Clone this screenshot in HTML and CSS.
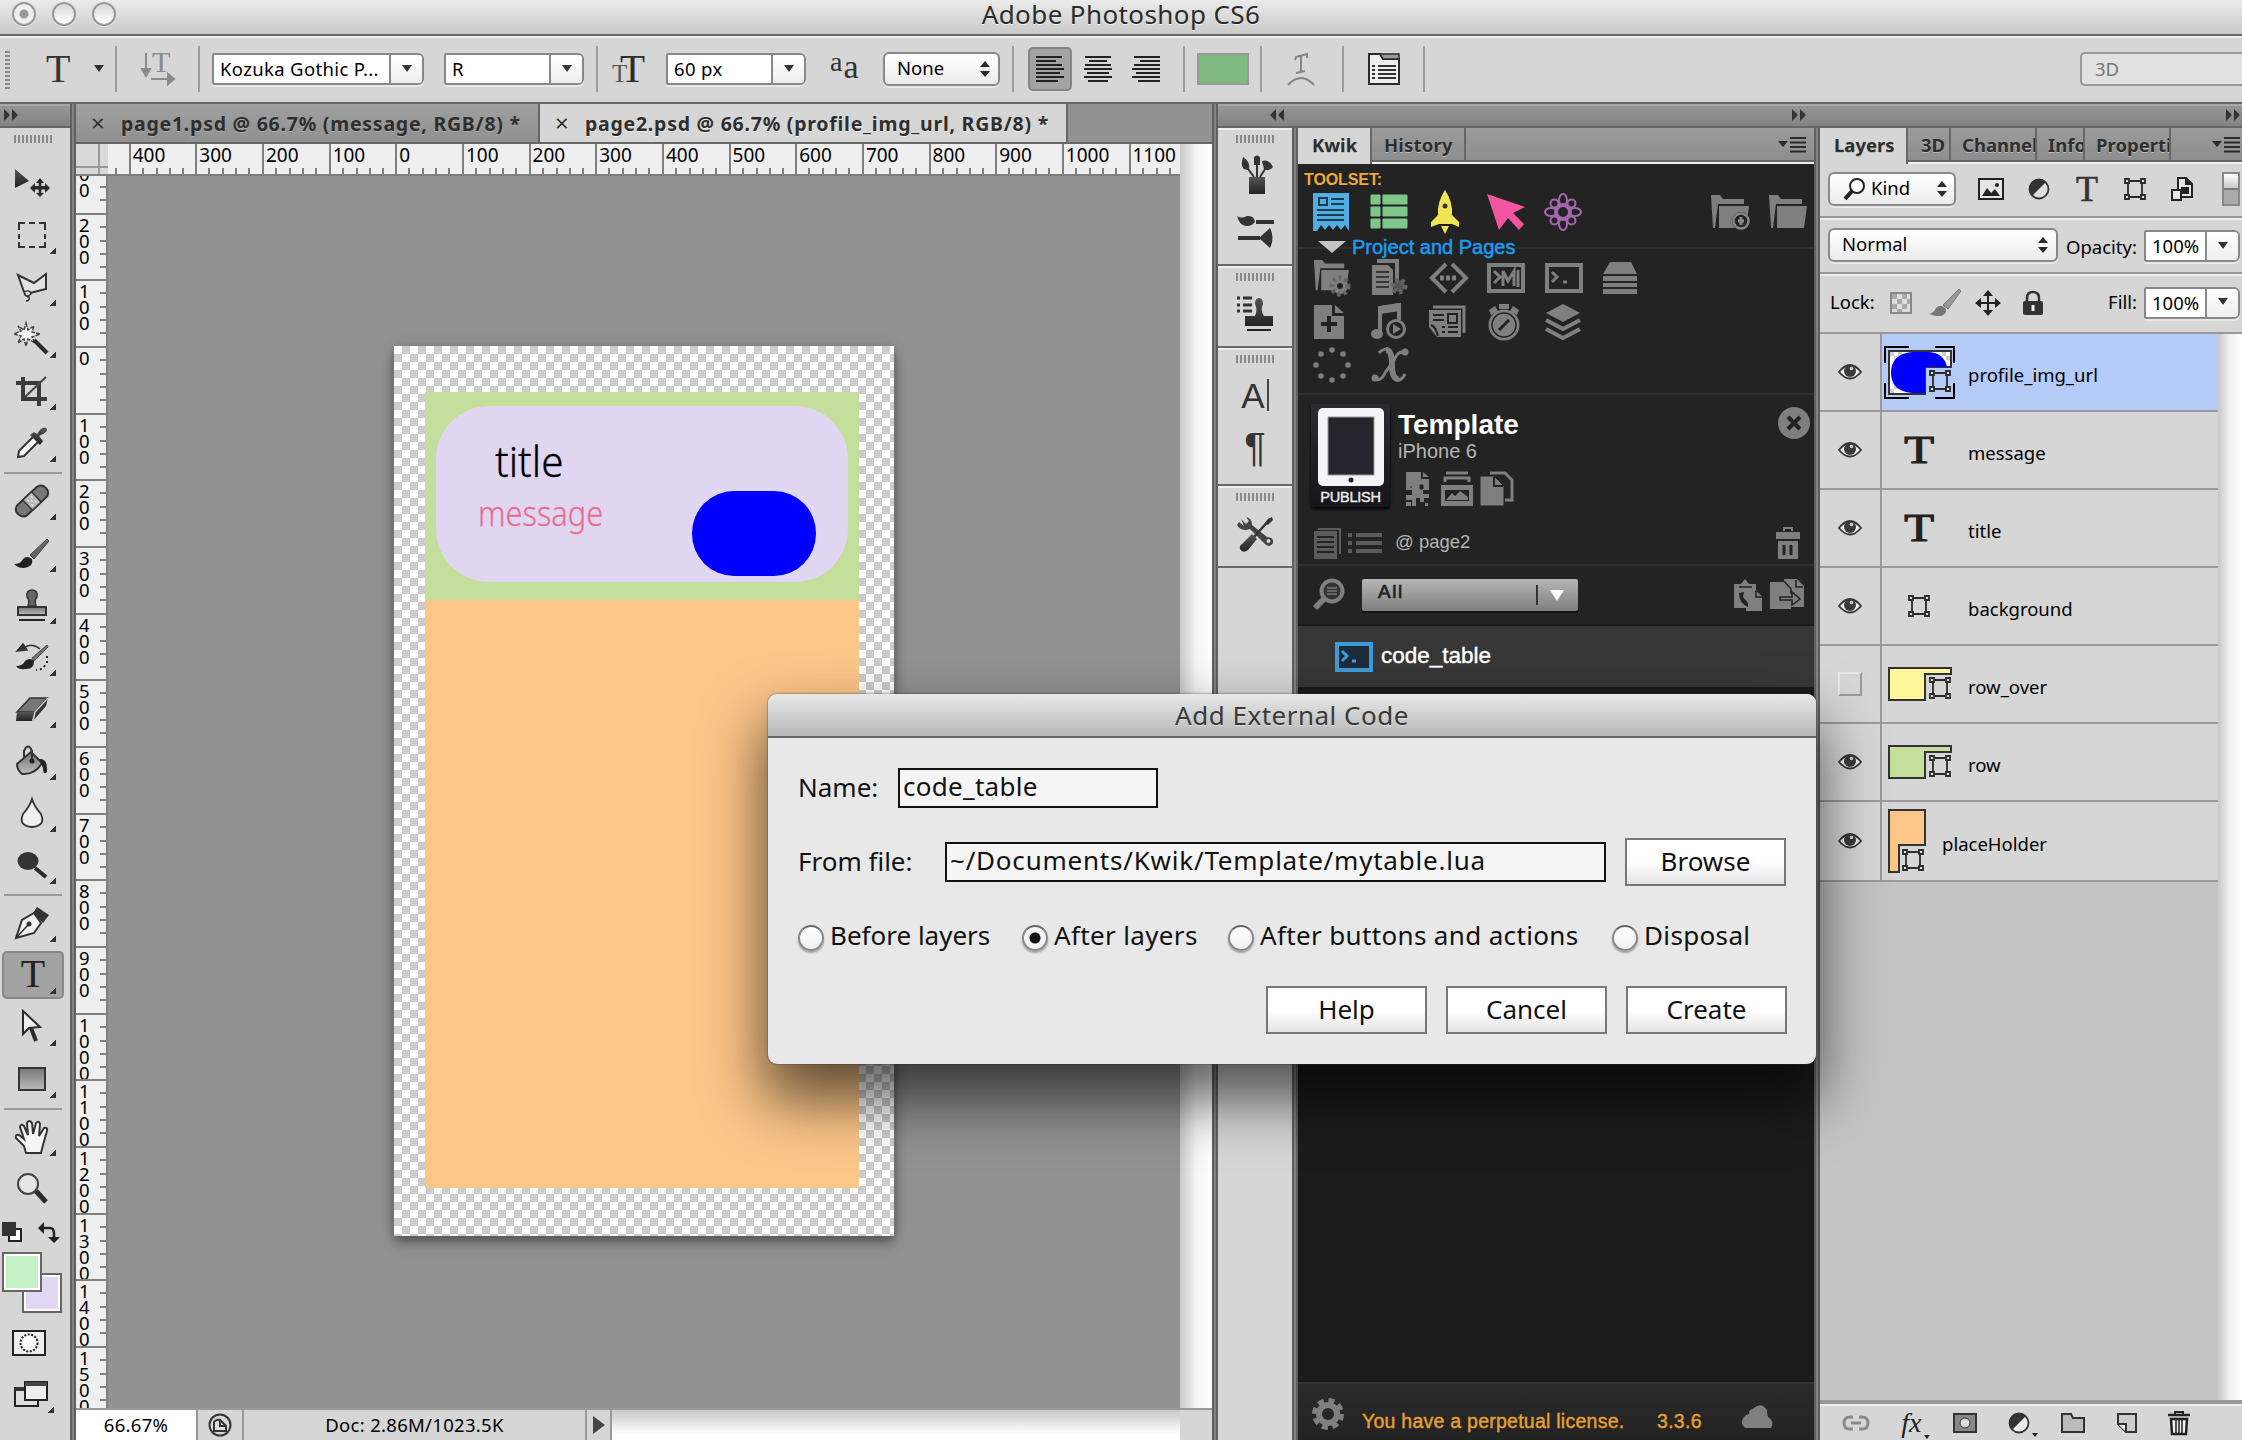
FILE: index.html
```html
<!DOCTYPE html>
<html lang="en">
<head>
<meta charset="utf-8">
<title>Adobe Photoshop CS6</title>
<link rel="stylesheet" href="styles.css">
</head>
<body>
<svg class="defs" width="0" height="0">
  <defs>
    <linearGradient id="gd" x1="0" y1="0" x2="0" y2="1"><stop offset="0" stop-color="#555"/><stop offset="1" stop-color="#222"/></linearGradient>
    <linearGradient id="gm" x1="0" y1="0" x2="0" y2="1"><stop offset="0" stop-color="#777"/><stop offset="1" stop-color="#bbb"/></linearGradient>
    <symbol id="eye" viewBox="0 0 24 18"><path d="M1 9Q12-5 23 9Q12 22 1 9Z" fill="#eee" stroke="#333" stroke-width="1.8"/><circle cx="12" cy="8" r="6" fill="#3a3a3a"/><circle cx="13.5" cy="5.5" r="1.8" fill="#ccc"/></symbol>
    <symbol id="frame" viewBox="0 0 22 22"><path d="M4 3H18V19H4Z" fill="none" stroke="#2b2b2b" stroke-width="1.8"/><g fill="#e4e4e4" stroke="#2b2b2b" stroke-width="1.8"><path d="M1 1H5V5H1ZM17 1H21V5H17ZM1 17H5V21H1ZM17 17H21V21H17Z"/></g></symbol>
    <symbol id="menu" viewBox="0 0 28 16"><path d="M0 4H10L5 10Z" fill="#2b2b2b"/><path d="M12 1H28M12 5.5H28M12 10H28M12 14.500H28" stroke="#2b2b2b" stroke-width="2"/></symbol>
    <symbol id="fwd" viewBox="0 0 14 12"><path d="M0 0L6 6L0 12ZM8 0L14 6L8 12Z" fill="#333"/></symbol>
    <symbol id="updown" viewBox="0 0 10 16"><path d="M0 6L5 0L10 6ZM0 10L5 16L10 10Z" fill="#2b2b2b"/></symbol>
    <symbol id="folder" viewBox="0 0 40 36"><path d="M1 1H10L13 5H34V10H8L5 34H3Z" fill="#7f7f7f"/><path d="M9 12H39L36 34H9Z" fill="#7f7f7f"/></symbol>
  </defs>
</svg>

<header class="titlebar">
  <div class="lights"><i class="light dot"></i><i class="light"></i><i class="light"></i></div>
  <span class="app-title">Adobe Photoshop CS6</span>
</header>

<section class="options">
  <i class="vgrip"></i>
  <span class="tool-t">T</span><i class="tri"></i><i class="sep s1"></i>
  <svg class="orient" width="34" height="34" viewBox="0 0 34 34"><path d="M5 1V22M1 17L5 24L9 17ZM10 27H30M27 22L33 27L27 32Z" stroke="#8a8a8a" stroke-width="2" fill="#8a8a8a"/><text x="11" y="20" class="svg-serif" font-size="30" fill="#8a8a8a">T</text></svg>
  <i class="sep s2"></i>
  <div class="combo c1"><span>Kozuka Gothic P...</span><b><i class="tri"></i></b></div>
  <div class="combo c2"><span>R</span><b><i class="tri"></i></b></div>
  <i class="sep s3"></i>
  <svg class="sizeic" width="34" height="30" viewBox="0 0 34 30"><text x="0" y="28" class="svg-serif" font-size="25" fill="#555">T</text><text x="8" y="28" class="svg-serif" font-size="41" fill="#2b2b2b">T</text></svg>
  <div class="combo c3"><span>60 px</span><b><i class="tri"></i></b></div>
  <svg class="aaic" width="30" height="30" viewBox="0 0 30 30"><text x="0" y="17" font-size="28" class="svg-serif" fill="#333">a</text><text x="13.500" y="24" font-size="34" class="svg-serif" fill="#333">a</text></svg>
  <div class="select none"><span>None</span><svg width="10" height="16"><use href="#updown"/></svg></div>
  <i class="sep s4"></i>
  <div class="align on"><svg width="28" height="28" viewBox="0 0 28 28"><path d="M0 2H26M0 6H20M0 10H26M0 14H28M0 18H24M0 22H28M0 26H22" stroke="#222" stroke-width="2"/></svg></div>
  <div class="align"><svg width="28" height="28" viewBox="0 0 28 28"><path d="M1 2H27M5 6H23M1 10H27M0 14H28M3 18H25M0 22H28M4 26H24" stroke="#222" stroke-width="2"/></svg></div>
  <div class="align"><svg width="28" height="28" viewBox="0 0 28 28"><path d="M2 2H28M8 6H28M2 10H28M0 14H28M4 18H28M0 22H28M6 26H28" stroke="#222" stroke-width="2"/></svg></div>
  <i class="sep s5"></i><i class="color"></i><i class="sep s6"></i>
  <svg class="warp" width="28" height="34" viewBox="0 0 28 34"><g fill="none" stroke="#858585" stroke-width="2"><path d="M8 8L9 5L20 2V6M14 4V19M9 21L18 19M1 33Q14 19 27 33"/></g></svg>
  <i class="sep s6"></i>
  <svg class="panelic" width="32" height="32" viewBox="0 0 32 32"><path d="M1 1H12L15 6H31V31H1Z" fill="#eee" stroke="#2b2b2b" stroke-width="2"/><path d="M12 1H31V6H15Z" fill="#999" stroke="#2b2b2b" stroke-width="1.500"/><path d="M4 13H7M10 13H28M4 17H7M10 17H28M4 21H7M10 21H28M4 25H7M10 25H28" stroke="#333" stroke-width="2"/></svg>
  <i class="sep s7"></i>
  <div class="workspace">3D</div>
</section>

<main class="work">
  <aside class="tools">
    <div class="dock-head"><svg width="14" height="12"><use href="#fwd"/></svg></div>
    <i class="hgrip"></i>
    <div class="tool bare"><svg width="36" height="28" viewBox="0 0 36 28"><path d="M1 0V19L15 12Z" fill="url(#gd)"/><path d="M26 9L30 14H27.300V17H31V14L36 19L31 24V20.500H27.300V24H30L26 28L22 24H24.700V20.500H21V24L16 19L21 14V17H24.700V14H22Z" fill="#2b2b2b"/></svg></div>
    <div class="tool"><svg width="28" height="26" viewBox="0 0 28 26"><path d="M1 8V1H7M11 1H17M21 1H27V8M27 12V17M27 20V25H21M17 25H11M7 25H1V20M1 17V12" fill="none" stroke="#333" stroke-width="2"/></svg></div>
    <div class="tool"><svg width="32" height="30" viewBox="0 0 32 30"><path d="M8 20L2 3L18 11L30 2V17L14 21" fill="#e2e2e2" stroke="#333" stroke-width="2"/><path d="M8 20Q14 17 15 22Q9 27 8 20Q10 25 13 25Q14 29 10 29" fill="none" stroke="#333" stroke-width="1.500"/></svg></div>
    <div class="tool"><svg width="36" height="34" viewBox="0 0 36 34"><path d="M12 1L14 8L20 4L18 10L26 12L18 15L21 21L14 17L12 24L10 17L4 21L7 14L0 12L7 9L4 4L10 8Z" fill="#f2f2f2" stroke="#444" stroke-width="1.500" stroke-dasharray="4 1"/><path d="M20 18L33 31" stroke="#2b2b2b" stroke-width="4"/></svg></div>
    <div class="tool"><svg width="32" height="30" viewBox="0 0 32 30"><path d="M0 7H23V30M7 1V23H31" fill="none" stroke="#3a3a3a" stroke-width="4"/><path d="M9 21L30 1" stroke="#444" stroke-width="2"/></svg></div>
    <div class="tool"><svg width="32" height="32" viewBox="0 0 32 32"><path d="M17 10L3 24L2 30L8 29L22 15" fill="#f5f5f5" stroke="#333" stroke-width="2"/><path d="M14 8L24 18L27 14L23 9Q34 4 30 1Q26-1 21 7L18 5Z" fill="url(#gd)"/></svg></div>
    <i class="tsep"></i>
    <div class="tool"><svg width="34" height="34" viewBox="0 0 34 34"><g transform="rotate(-43 17 17)"><rect x="-2" y="10" width="38" height="14" rx="6" fill="#777" stroke="#333" stroke-width="2"/><path d="M11 10H23V24H11Z" fill="#bbb" stroke="#333" stroke-width="1.500"/><path d="M14 14h1M19 14h1M16.500 17h1M14 20h1M19 20h1" stroke="#fff" stroke-width="2"/></g></svg></div>
    <div class="tool"><svg width="36" height="30" viewBox="0 0 36 30"><path d="M16 17L33 1L35 3L20 21Z" fill="#666" stroke="#444"/><path d="M0 26Q7 26 9 21Q13 17 18 21Q20 29 9 30Q4 30 0 26Z" fill="#222"/></svg></div>
    <div class="tool"><svg width="32" height="32" viewBox="0 0 32 32"><path d="M12 17Q14 11 11 8Q10 1 16 1Q22 1 21 8Q18 11 20 17Z" fill="#666" stroke="#333" stroke-width="1.500"/><path d="M2 18H30V26H2Z" fill="url(#gm)" stroke="#333" stroke-width="2"/><path d="M3 31H29" stroke="#222" stroke-width="2"/></svg></div>
    <div class="tool"><svg width="36" height="28" viewBox="0 0 36 28"><path d="M3 8L9 1L13 7Z" fill="#333" stroke="#333" stroke-width="1.500"/><path d="M9 5Q18-1 26 6" fill="none" stroke="#333" stroke-width="1.500"/><path d="M18 15L33 2L34 4L20 18Z" fill="#777" stroke="#444"/><path d="M2 23Q9 23 11 18Q16 14 20 18Q20 27 11 26Q5 27 2 23Z" fill="#222"/><path d="M33 13V20L28 26L22 27" fill="none" stroke="#222" stroke-width="2" stroke-dasharray="2 3"/></svg></div>
    <div class="tool"><svg width="34" height="28" viewBox="0 0 34 28"><path d="M2 17L15 3H32L20 17Z" fill="#777" stroke="#333" stroke-width="1.500"/><path d="M2 17H20L17 26H1Z" fill="url(#gd)"/><path d="M20 17L33 3L31 11L18 26Z" fill="#333"/><path d="M18 26L20 17L33 3" fill="none" stroke="#ccc" stroke-width="1.500"/></svg></div>
    <div class="tool"><svg width="34" height="34" viewBox="0 0 34 34"><path d="M16 8L27 19Q20 31 7 30Q2 26 2 20Z" fill="url(#gm)" stroke="#333" stroke-width="2"/><path d="M9 14V7Q13-2 17 7V17" fill="none" stroke="#333" stroke-width="2"/><circle cx="17" cy="17" r="2.500" fill="#222"/><path d="M24 15Q33 14 32 28Q28 32 28 24Z" fill="#222"/></svg></div>
    <div class="tool"><svg width="24" height="30" viewBox="0 0 24 30"><path d="M12 1Q14 8 21 16Q26 28 12 29Q-2 28 3 16Q10 8 12 1Z" fill="#eee" stroke="#333" stroke-width="1.800"/></svg></div>
    <div class="tool"><svg width="30" height="28" viewBox="0 0 30 28"><ellipse cx="11" cy="10" rx="10.500" ry="9" fill="#333"/><path d="M18 17L29 26" stroke="#2b2b2b" stroke-width="4"/></svg></div>
    <i class="tsep"></i>
    <div class="tool"><svg width="36" height="34" viewBox="0 0 36 34"><path d="M2 32L8 14L20 7L27 17L20 27Z" fill="#f2f2f2" stroke="#333" stroke-width="2"/><path d="M2 32L14 19" stroke="#333" stroke-width="1.500"/><circle cx="15" cy="18" r="2.500" fill="#333"/><path d="M23 1L35 9L29 17L19 7Z" fill="#333"/></svg></div>
    <div class="tool sel"><span class="big-t">T</span></div>
    <div class="tool"><svg width="22" height="34" viewBox="0 0 22 34"><path d="M2 1V24L8 18L19 17Z" fill="#eee" stroke="#2b2b2b" stroke-width="2"/><path d="M10 18L15 31" stroke="#2b2b2b" stroke-width="4"/></svg></div>
    <div class="tool"><svg width="28" height="24" viewBox="0 0 28 24"><rect x="1" y="1" width="26" height="22" fill="url(#gm)" stroke="#333" stroke-width="2"/></svg></div>
    <i class="tsep"></i>
    <div class="tool"><svg width="36" height="36" viewBox="0 0 36 36"><path d="M12 34L10 27L2 19Q1 15 5 16L10 20L6 8Q7 4 10 7L14 16L13 4Q15 0 18 4L19 15L22 4Q25 1 26 5L25 17L30 9Q34 8 33 12L29 26L27 34Z" fill="#f5f5f5" stroke="#333" stroke-width="2"/></svg></div>
    <div class="tool bare"><svg width="32" height="32" viewBox="0 0 32 32"><path d="M20 18L30 29" stroke="#2b2b2b" stroke-width="5"/><circle cx="12" cy="11" r="10" fill="#e4e4e4" stroke="#444" stroke-width="2"/></svg></div>
    <div class="minirow"><svg width="20" height="20" viewBox="0 0 20 20"><path d="M7 7H19V19H7Z" fill="#fff" stroke="#222" stroke-width="2"/><path d="M0 0H14V14H0Z" fill="#333"/></svg><svg width="22" height="22" viewBox="0 0 22 22"><path d="M5 6H12Q16 6 16 12V16" fill="none" stroke="#222" stroke-width="2.500"/><path d="M0 6L6 0V12ZM10 15H22L16 21Z" fill="#222"/></svg></div>
    <div class="swatches"><i class="bgc"></i><i class="fgc"></i></div>
    <div class="mask"><svg width="34" height="26" viewBox="0 0 34 26"><rect x="1" y="1" width="32" height="24" fill="#f0f0f0" stroke="#222" stroke-width="2"/><circle cx="17" cy="13" r="8.500" fill="#fff" stroke="#222" stroke-width="2" stroke-dasharray="2 1.500"/></svg></div>
    <div class="tool screen"><svg width="34" height="26" viewBox="0 0 34 26"><path d="M1 7H24V25H1Z" fill="#ddd" stroke="#222" stroke-width="2"/><path d="M1 6H14V10H1Z" fill="#333"/><path d="M11 1H33V19H11Z" fill="#eee" stroke="#222" stroke-width="2"/><path d="M11 1H33V5H11Z" fill="#444"/></svg></div>
  </aside>
  <i class="divider"></i>

  <section class="document">
    <nav class="doctabs">
      <div class="dtab t1"><span class="x">×</span><span>page1.psd @ 66.7% (message, RGB/8) *</span></div>
      <div class="dtab t2 active"><span class="x">×</span><span>page2.psd @ 66.7% (profile_img_url, RGB/8) *</span></div>
    </nav>
    <div class="viewport">
      <i class="corner"></i>
      <div class="hruler"><span></span><span>400</span><span>300</span><span>200</span><span>100</span><span>0</span><span>100</span><span>200</span><span>300</span><span>400</span><span>500</span><span>600</span><span>700</span><span>800</span><span>900</span><span>1000</span><span>1100</span></div>
      <i class="vscroll"></i>
      <div class="vruler"><span>300</span><span>200</span><span>100</span><span>0</span><span>100</span><span>200</span><span>300</span><span>400</span><span>500</span><span>600</span><span>700</span><span>800</span><span>900</span><span>1000</span><span>1100</span><span>1200</span><span>1300</span><span>1400</span><span>1500</span></div>
      <div class="canvas">
        <div class="artboard">
          <i class="placeholder"></i><i class="row-bg"></i><i class="bubble"></i><i class="pill"></i>
          <span class="a-title">title</span><span class="a-msg">message</span>
        </div>
      </div>
    </div>
    <footer class="status">
      <span class="zoomv">66.67%</span>
      <span class="drive"><svg width="24" height="24" viewBox="0 0 24 24"><circle cx="12" cy="12" r="10.500" fill="none" stroke="#333" stroke-width="2"/><path d="M6 18V9Q8 6 12 7L18 13V18Z" fill="#ddd" stroke="#333" stroke-width="2"/><path d="M12 7V13H18" fill="none" stroke="#333" stroke-width="2"/></svg></span>
      <span class="doc">Doc: 2.86M/1023.5K</span>
      <span class="play"><i></i></span>
      <i class="hscroll"></i><i class="scorner"></i>
    </footer>
  </section>
  <i class="divider"></i>

  <section class="right">
    <div class="dock-head wide"><svg class="back" width="14" height="12"><use href="#fwd"/></svg><svg width="14" height="12"><use href="#fwd"/></svg><svg width="14" height="12"><use href="#fwd"/></svg></div>
    <div class="panels">
      <aside class="strip">
        <div class="sgroup g1"><i class="hgrip"></i>
          <svg width="34" height="40" viewBox="0 0 34 40"><path d="M10 22H26V39H10Z" fill="url(#gd)"/><path d="M15 22L7 11M18 22V8M21 22L28 11" stroke="#333" stroke-width="2"/><path d="M4 2Q13 8 9 15Q0 15 4 2ZM15 2Q18-1 21 2V10H15ZM23 6Q30 4 34 12Q30 17 25 14Z" fill="#333"/></svg>
          <svg width="38" height="34" viewBox="0 0 38 34"><path d="M1 1Q5 4 11 1Q18 0 19 7Q14 13 7 10Q3 8 1 1Z" fill="#333"/><path d="M20 7H38M2 23H24" stroke="#333" stroke-width="4"/><path d="M23 23L34 13Q39 23 34 33Z" fill="#333"/></svg></div>
        <div class="sgroup g2"><i class="hgrip"></i>
          <svg width="38" height="36" viewBox="0 0 38 36"><path d="M1 2H4M7 2H16M1 9H4M7 9H16M1 15H4M7 15H16" stroke="#333" stroke-width="3"/><path d="M9 20H19Q22 14 19 8Q19 2 23 2Q27 2 27 8Q24 14 28 20H37V30H9Z" fill="url(#gd)"/><path d="M11 34H35" stroke="#222" stroke-width="2"/></svg></div>
        <div class="sgroup g3"><i class="hgrip"></i><span class="ai">A</span><span class="para">¶</span></div>
        <div class="sgroup g4"><i class="hgrip"></i>
          <svg width="38" height="36" viewBox="0 0 38 36"><path d="M5 3L10 8L13 5L10 1Q16 2 16 9L31 21Q38 21 37 27Q33 33 28 27L14 13Q5 16 1 9L3 6L8 10" fill="#444"/><circle cx="32.500" cy="25" r="2" fill="#d6d6d6"/><path d="M34 3L18 21" stroke="#333" stroke-width="2.500"/><path d="M32 3L36 1L37 4L32 9L29 7Z" fill="#333"/><path d="M16 18L21 23L12 34Q7 38 4 33Q3 30 6 28Z" fill="url(#gd)"/></svg></div>
      </aside>
      <i class="divider"></i>
      <section class="kwik">
        <nav class="ptabs"><span class="on k1">Kwik</span><span class="k2">History</span><svg width="28" height="16"><use href="#menu"/></svg></nav>
        <div class="ktop">
          <div class="toolset">TOOLSET:</div>
          <div class="kgrid colors">
            <svg width="38" height="40" viewBox="0 0 38 40"><path d="M1 1H37V39L33 33L29 38L25 33L21 38L17 33L13 38L9 33L5 39H1Z" fill="#51aee2"/><path d="M7 6H15V13H7ZM19 7H32M19 12H32M5 18H32M5 23H32M5 28H32" stroke="#1c3c50" stroke-width="2" fill="none"/></svg>
            <svg width="38" height="36" viewBox="0 0 38 36"><path d="M1 1H10V10H1ZM13 1H37V10H13ZM1 13H10V22H1ZM13 13H37V22H13ZM1 25H10V34H1ZM13 25H37V34H13Z" fill="#7fc68b" stroke="#7fc68b" stroke-linejoin="round"/></svg>
            <svg width="38" height="44" viewBox="0 0 38 44"><path d="M17 0Q25 12 24 25L31 32V37L24 34H11L3 37V32L10 25Q9 12 17 0ZM13 36H21L17 44Z" fill="#eee456"/><circle cx="17" cy="16" r="2.500" fill="#333"/></svg>
            <svg width="40" height="38" viewBox="0 0 40 38"><path d="M1 1L39 14L27 20L38 31L33 37L22 25L13 37Z" fill="#f255a0"/></svg>
            <svg width="38" height="38" viewBox="0 0 38 38"><g fill="none" stroke="#a566af" stroke-width="2"><circle cx="19" cy="19" r="7" stroke-width="4"/><ellipse cx="19" cy="7" rx="4" ry="6"/><ellipse cx="19" cy="31" rx="4" ry="6"/><ellipse cx="7" cy="19" rx="6" ry="4"/><ellipse cx="31" cy="19" rx="6" ry="4"/><circle cx="10.500" cy="10.500" r="4"/><circle cx="27.500" cy="10.500" r="4"/><circle cx="10.500" cy="27.500" r="4"/><circle cx="27.500" cy="27.500" r="4"/></g></svg>
            <svg class="f1" width="40" height="36" viewBox="0 0 40 36"><use href="#folder"/><circle cx="31" cy="27" r="9" fill="#222"/><circle cx="31" cy="27" r="7.500" fill="none" stroke="#888" stroke-width="2.500"/><path d="M31 23V31M28 27H34" stroke="#888" stroke-width="3"/></svg>
            <svg class="f2" width="40" height="36"><use href="#folder"/></svg>
          </div>
          <div class="pp"><i></i><span>Project and Pages</span></div>
          <div class="kgrid r1">
            <svg width="38" height="38" viewBox="0 0 38 38"><g transform="scale(.92)"><use href="#folder" width="40" height="36"/></g><circle cx="27" cy="27" r="8" fill="#7f7f7f" stroke="#666" stroke-width="5" stroke-dasharray="3 3"/><circle cx="27" cy="27" r="3" fill="#222"/></svg>
            <svg width="38" height="38" viewBox="0 0 38 38"><path d="M6 0H28V28H24V4H6Z" fill="#7f7f7f"/><path d="M1 6H17L22 11V36H1Z" fill="#7f7f7f"/><path d="M5 13H18M5 18H18M5 23H18M5 28H18" stroke="#222" stroke-width="1.500"/><circle cx="28" cy="27" r="6" fill="#555" stroke="#666" stroke-width="5" stroke-dasharray="3 3"/></svg>
            <svg width="40" height="32" viewBox="0 0 40 32"><path d="M17 2L3 16L17 30M23 2L37 16L23 30" fill="none" stroke="#7f7f7f" stroke-width="4"/><path d="M11 16H29" stroke="#7f7f7f" stroke-width="5" stroke-dasharray="4 2"/></svg>
            <svg width="38" height="30" viewBox="0 0 38 30"><rect x="2" y="2" width="34" height="26" fill="none" stroke="#7f7f7f" stroke-width="4"/><path d="M7 8L13 14L7 20M16 23V8L21 18L27 8V23M31 7V24" fill="none" stroke="#7f7f7f" stroke-width="3"/></svg>
            <svg width="38" height="30" viewBox="0 0 38 30"><rect x="2" y="2" width="34" height="26" fill="none" stroke="#7f7f7f" stroke-width="4"/><path d="M7 9L12 14L7 19M18 19H22" fill="none" stroke="#7f7f7f" stroke-width="3"/></svg>
            <svg width="34" height="32" viewBox="0 0 34 32"><path d="M7 0H28L34 12H0ZM0 14H34V19H0ZM0 21H34V25H0ZM0 27H34V32H0Z" fill="#7f7f7f"/></svg>
          </div>
          <div class="kgrid r2">
            <svg width="32" height="36" viewBox="0 0 32 36"><path d="M1 1H19V12H31V35H1ZM22 1L31 9H22Z" fill="#7f7f7f"/><path d="M16 12V28M8 20H24" stroke="#222" stroke-width="4"/></svg>
            <svg width="36" height="38" viewBox="0 0 36 38"><path d="M9 30V5L28 2V17" fill="none" stroke="#7f7f7f" stroke-width="4"/><path d="M9 3L29 0V8L9 11Z" fill="#7f7f7f"/><ellipse cx="6" cy="31" rx="6" ry="5" fill="#7f7f7f"/><circle cx="25" cy="26" r="8.500" fill="#222" stroke="#7f7f7f" stroke-width="3"/><path d="M22 21L30 26L22 31Z" fill="#7f7f7f"/></svg>
            <svg width="36" height="34" viewBox="0 0 36 34"><path d="M4 2H35V28" fill="none" stroke="#7f7f7f" stroke-width="3"/><path d="M0 5H32V32H8L0 22Z" fill="#7f7f7f"/><path d="M4 10H15M4 15H15M19 9H28V18H19ZM13 22H16M19 22H29M13 27H16M19 27H29M2 20Q7 22 9 31" stroke="#222" stroke-width="2" fill="none"/></svg>
            <svg width="34" height="38" viewBox="0 0 34 38"><path d="M12 1H22V6H12ZM2 7L8 3L11 8L4 12ZM32 7L26 3L23 8L30 12Z" fill="#7f7f7f"/><circle cx="17" cy="22" r="14" fill="#7f7f7f" stroke="#7f7f7f" stroke-width="3"/><circle cx="17" cy="22" r="12" fill="none" stroke="#222" stroke-width="1.500"/><path d="M12 27L22 17" stroke="#222" stroke-width="3"/></svg>
            <svg width="36" height="36" viewBox="0 0 36 36"><path d="M18 0L35 9L18 18L1 9Z" fill="#7f7f7f"/><path d="M1 16L18 25L35 16M1 25L18 34L35 25" fill="none" stroke="#7f7f7f" stroke-width="4"/></svg>
          </div>
          <div class="kgrid r3">
            <svg width="38" height="36" viewBox="0 0 38 36"><g fill="#7f7f7f"><circle cx="19" cy="3" r="2.800"/><circle cx="30" cy="7" r="2.800"/><circle cx="35" cy="18" r="2.800"/><circle cx="30" cy="29" r="2.800"/><circle cx="19" cy="33" r="2.800"/><circle cx="8" cy="29" r="2.800"/><circle cx="3" cy="18" r="2.800"/><circle cx="8" cy="7" r="2.800"/></g></svg>
            <svg width="38" height="36" viewBox="0 0 38 36"><path d="M15 3Q21 3 21 18Q21 33 28 32" fill="none" stroke="#7f7f7f" stroke-width="6"/><path d="M8 6Q11 2 17 2M27 33Q31 33 34 27M35 5Q27 3 23 13L14 26Q10 35 3 32" fill="none" stroke="#7f7f7f" stroke-width="3"/><circle cx="34" cy="5" r="3.500" fill="#7f7f7f"/><circle cx="4" cy="31" r="3.500" fill="#7f7f7f"/></svg>
          </div>
        </div>
        <div class="proj">
          <div class="publish"><svg width="66" height="78" viewBox="0 0 66 78"><rect width="66" height="78" rx="5" fill="#f4f4f6"/><rect x="10" y="9" width="46" height="58" fill="#25262d" stroke="#999"/><circle cx="33" cy="72" r="2.500" fill="#222"/></svg><span>PUBLISH</span></div>
          <div class="pinfo"><b>Template</b><span>iPhone 6</span>
            <div class="pic">
              <svg width="26" height="34" viewBox="0 0 26 34"><path d="M1 0H16V7H24V18H18V22H24V26H19V30H15V26H11V34H7V28H1V23H7V18H1ZM18 0L24 5H18Z" fill="#7f7f7f"/><path d="M15 13H18V17H15ZM5 15H7" stroke="#222" fill="#222"/><path d="M1 30H6V34H1ZM20 31H23V34H20Z" fill="#7f7f7f"/></svg>
              <svg width="32" height="34" viewBox="0 0 32 34"><path d="M5 1H27M4 10V6H28V10" fill="none" stroke="#7f7f7f" stroke-width="3"/><path d="M0 13H32V34H0Z" fill="#7f7f7f"/><path d="M4 18H28V29H4Z" fill="#222"/><path d="M5 28L11 21L14 24L19 19L27 25V28Z" fill="#7f7f7f"/></svg>
              <svg width="34" height="34" viewBox="0 0 34 34"><path d="M10 1H25L32 8V28H25" fill="none" stroke="#7f7f7f" stroke-width="3"/><path d="M0 4H14L24 14V34H0Z" fill="#7f7f7f" stroke="#232323" stroke-width="1"/><path d="M14 5V14H23" fill="none" stroke="#232323" stroke-width="2"/></svg>
            </div></div>
          <svg class="close" width="32" height="32" viewBox="0 0 32 32"><circle cx="16" cy="16" r="16" fill="#7f7f7f"/><path d="M10 10L22 22M22 10L10 22" stroke="#222" stroke-width="4"/></svg>
        </div>
        <div class="pagerow">
          <svg width="28" height="32" viewBox="0 0 28 32"><path d="M4 2H26V27" fill="none" stroke="#5c5c5c" stroke-width="2"/><path d="M0 4H23V32H0Z" fill="#5c5c5c"/><path d="M3 10H20M3 15H20M3 20H20M3 25H20" stroke="#222" stroke-width="2"/></svg>
          <svg width="34" height="22" viewBox="0 0 34 22"><path d="M0 3H4M8 3H34M0 11H4M8 11H34M0 19H4M8 19H34" stroke="#5c5c5c" stroke-width="4"/></svg>
          <span>@ page2</span>
          <svg class="bin" width="24" height="32" viewBox="0 0 24 32"><path d="M8 4V1H16V4" fill="none" stroke="#7f7f7f" stroke-width="2"/><path d="M0 5H24V12H0ZM2 14H22V32H2Z" fill="#7f7f7f"/><path d="M8 18V28M15 18V28" stroke="#222" stroke-width="3"/></svg>
        </div>
        <div class="filterrow">
          <svg width="34" height="32" viewBox="0 0 34 32"><circle cx="20" cy="12" r="10.500" fill="#333" stroke="#7f7f7f" stroke-width="4"/><path d="M15 9H25M15 12H25M15 15H25" stroke="#777" stroke-width="1.500"/><path d="M12 20L3 29" stroke="#7f7f7f" stroke-width="6"/></svg>
          <div class="alldrop"><span>All</span><i></i><b></b></div>
          <svg class="p1" width="28" height="32" viewBox="0 0 28 32"><path d="M0 5H7L11 0L15 5H22V12L28 17V32H12V29H0Z" fill="#7f7f7f"/><path d="M5 8H18M22 12V18H28" stroke="#222" stroke-width="1.500" fill="none"/><path d="M5 14L10 13L9 18L14 24V28Q5 24 5 14Z" fill="#222"/></svg>
          <svg class="p2" width="34" height="32" viewBox="0 0 34 32"><path d="M0 3H14V0H27L34 7V28H21V30H0Z" fill="#7f7f7f"/><path d="M14 2L21 10V15M26 1V8H33M10 18H22V13L30 20L22 26V21H10Z" stroke="#222" stroke-width="1.500" fill="none"/></svg>
        </div>
        <div class="coderow"><svg width="38" height="30" viewBox="0 0 38 30"><rect x="2" y="2" width="34" height="26" fill="#1d2c38" stroke="#3f9bd8" stroke-width="4"/><path d="M7 9L12 14L7 19M17 19H21" fill="none" stroke="#3f9bd8" stroke-width="3"/></svg><span>code_table</span></div>
        <div class="kfill"></div>
        <footer class="kfoot">
          <svg width="32" height="32" viewBox="0 0 32 32"><circle cx="16" cy="16" r="13.500" fill="none" stroke="#7f7f7f" stroke-width="5" stroke-dasharray="6 4.600"/><circle cx="16" cy="16" r="9" fill="none" stroke="#7f7f7f" stroke-width="6"/></svg>
          <span class="lic">You have a perpetual license.</span><span class="ver">3.3.6</span>
          <svg class="cloud" width="32" height="24" viewBox="0 0 32 24"><path d="M4 23Q-2 18 3 12Q5 9 8 9Q8 4 12 4Q20-4 26 5Q26 9 27 12Q34 16 30 23Z" fill="#7f7f7f"/></svg>
        </footer>
      </section>
      <i class="divider"></i>
      <section class="layers">
        <nav class="ptabs"><span class="on l1">Layers</span><span class="l2">3D</span><span class="l3">Channels</span><span class="l4">Info</span><span class="l5">Properties</span><svg width="28" height="16"><use href="#menu"/></svg></nav>
        <div class="lrow filter">
          <div class="select kind"><svg width="22" height="22" viewBox="0 0 22 22"><circle cx="13" cy="8" r="7" fill="#fff" stroke="#222" stroke-width="2"/><path d="M8 13L1 21" stroke="#222" stroke-width="4"/></svg><span>Kind</span><svg width="10" height="16"><use href="#updown"/></svg></div>
          <svg class="fi1" width="26" height="22" viewBox="0 0 26 22"><rect x="1" y="1" width="24" height="20" fill="#e5e5e5" stroke="#222" stroke-width="2"/><path d="M4 18L9 10L13 15L17 11L22 18Z" fill="#222"/><circle cx="19" cy="7" r="2" fill="#222"/></svg>
          <svg class="fi2" width="22" height="22" viewBox="0 0 22 22"><circle cx="11" cy="11" r="9.500" fill="#ddd" stroke="#333" stroke-width="1.800"/><path d="M4 18A9.500 9.500 0 0 1 18 4Z" fill="#333"/></svg>
          <span class="fit">T</span>
          <svg class="fi4" width="22" height="22"><use href="#frame"/></svg>
          <svg class="fi5" width="22" height="24" viewBox="0 0 22 24"><path d="M7 1H15L21 7V20H7Z" fill="#e5e5e5" stroke="#222" stroke-width="2"/><path d="M14 1V8H21M10 10H18V17H10Z" fill="#222"/><path d="M1 13H10V23H1Z" fill="#e5e5e5" stroke="#222" stroke-width="2"/></svg>
          <i class="toggle"></i>
        </div>
        <div class="lrow blend">
          <div class="select normal"><span>Normal</span><svg width="10" height="16"><use href="#updown"/></svg></div>
          <label>Opacity:</label><div class="combo pc"><span>100%</span><b><i class="tri"></i></b></div>
        </div>
        <div class="lrow lock">
          <label>Lock:</label>
          <svg class="lk1" width="22" height="22" viewBox="0 0 22 22"><rect x="1" y="1" width="20" height="20" fill="#ddd" stroke="#888" stroke-width="2"/><path d="M2 2H7V7H2ZM12 2H17V7H12ZM7 7H12V12H7ZM17 7H20V12H17ZM2 12H7V17H2ZM12 12H17V17H12ZM7 17H12V20H7Z" fill="#aaa"/></svg>
          <svg class="lk2" width="32" height="28" viewBox="0 0 32 28"><path d="M14 16L30 0L32 2L19 20Z" fill="#999" stroke="#777"/><path d="M0 25Q5 24 7 19Q12 14 17 20Q18 28 7 27Z" fill="#777"/></svg>
          <svg class="lk3" width="26" height="26" viewBox="0 0 26 26"><path d="M13 3V23M3 13H23" stroke="#222" stroke-width="2"/><path d="M13 0L18 6H8ZM13 26L18 20H8ZM0 13L6 8V18ZM26 13L20 8V18Z" fill="#222"/></svg>
          <svg class="lk4" width="22" height="24" viewBox="0 0 22 24"><path d="M5 12V7Q5 1 11 1Q17 1 17 7V12" fill="none" stroke="#333" stroke-width="2.500"/><rect x="1" y="10" width="20" height="14" rx="2" fill="#333"/><path d="M11 14V20" stroke="#eee" stroke-width="3"/></svg>
          <label class="fill">Fill:</label><div class="combo pc"><span>100%</span><b><i class="tri"></i></b></div>
        </div>
        <div class="llist">
          <ul>
            <li class="cur"><span class="eyec"><svg width="24" height="18"><use href="#eye"/></svg></span><span class="th"><svg width="72" height="54" viewBox="0 0 72 54"><path d="M6 6H68V22H42V49H6Z" fill="#fff" stroke="#333" stroke-width="2"/><path d="M7 7H11V11H7ZM15 7H19V11H15ZM11 11H15V15H11ZM59 7H63V11H59ZM63 11H67V15H63ZM7 44H11V48H7ZM11 40H15V44H11Z" fill="#ccc"/><path d="M29 7H46Q61 8 64 22H42V48H29Q8 46 8 28Q8 9 29 7Z" fill="#00f"/><path d="M2 18V2H26M52 2H71V18M2 38V53H26M52 53H71V38" fill="none" stroke="#000" stroke-width="2"/><use href="#frame" x="46" y="25" width="22" height="22"/></svg></span><span>profile_img_url</span></li>
            <li><span class="eyec"><svg width="24" height="18"><use href="#eye"/></svg></span><span class="th tt"><em>T</em></span><span>message</span></li>
            <li><span class="eyec"><svg width="24" height="18"><use href="#eye"/></svg></span><span class="th tt"><em>T</em></span><span>title</span></li>
            <li><span class="eyec"><svg width="24" height="18"><use href="#eye"/></svg></span><span class="th ff"><svg width="22" height="22"><use href="#frame"/></svg></span><span>background</span></li>
            <li><span class="eyec"><i class="noeye"></i></span><span class="th"><svg width="72" height="36" viewBox="0 0 72 36"><path d="M6 2H68V8H42V34H6Z" fill="#fff799" stroke="#333" stroke-width="2"/><use href="#frame" x="46" y="11" width="22" height="22"/></svg></span><span>row_over</span></li>
            <li><span class="eyec"><svg width="24" height="18"><use href="#eye"/></svg></span><span class="th"><svg width="72" height="36" viewBox="0 0 72 36"><path d="M6 2H68V8H42V34H6Z" fill="#c4df9b" stroke="#333" stroke-width="2"/><use href="#frame" x="46" y="11" width="22" height="22"/></svg></span><span>row</span></li>
            <li class="last"><span class="eyec"><svg width="24" height="18"><use href="#eye"/></svg></span><span class="th"><svg width="46" height="66" viewBox="0 0 46 66"><path d="M6 2H42V37H16V64H6Z" fill="#fdc689" stroke="#333" stroke-width="2"/><use href="#frame" x="19" y="41" width="22" height="22"/></svg></span><span>placeHolder</span></li>
          </ul>
          <i class="lscroll"></i>
        </div>
        <footer class="lfoot">
          <svg width="28" height="16" viewBox="0 0 28 16"><path d="M11 2H8Q2 2 2 8Q2 14 8 14H11M17 2H20Q26 2 26 8Q26 14 20 14H17M9 8H19" fill="none" stroke="#8a8a8a" stroke-width="3"/></svg>
          <span class="fx more">fx</span>
          <svg width="24" height="20" viewBox="0 0 24 20"><rect x="1" y="1" width="22" height="18" fill="#888" stroke="#333" stroke-width="2"/><circle cx="12" cy="10" r="5" fill="#ddd" stroke="#333"/></svg>
          <span class="more"><svg width="22" height="22" viewBox="0 0 22 22"><circle cx="11" cy="11" r="9.500" fill="#eee" stroke="#333" stroke-width="1.800"/><path d="M4 18A9.500 9.500 0 0 1 18 4Z" fill="#333"/></svg></span>
          <svg width="24" height="20" viewBox="0 0 24 20"><path d="M1 1H10L12 5H23V19H1Z" fill="#bbb" stroke="#333" stroke-width="2"/></svg>
          <svg width="20" height="20" viewBox="0 0 20 20"><path d="M1 1H19V19H9L1 11Z" fill="#ccc" stroke="#333" stroke-width="2"/><path d="M1 11H9V19" fill="#eee" stroke="#333" stroke-width="2"/></svg>
          <svg width="22" height="24" viewBox="0 0 22 24"><path d="M7 3V1H15V3" fill="none" stroke="#222" stroke-width="2"/><path d="M0 4H22M3 8H19L18 23H4Z" fill="#eee" stroke="#222" stroke-width="2.500"/><path d="M8 9V22M11 9V22M14 9V22" stroke="#222" stroke-width="1.500"/></svg>
        </footer>
      </section>
    </div>
  </section>
</main>

<div class="dialog">
  <header>Add External Code</header>
  <div class="body">
    <div class="frow"><label class="nm">Name:</label><div class="input i1">code_table</div></div>
    <div class="frow two"><label class="ff">From file:</label><div class="input i2">~/Documents/Kwik/Template/mytable.lua</div><div class="btn">Browse</div></div>
    <div class="radios"><label class="r-a"><i></i>Before layers</label><label class="r-b"><i class="on"></i>After layers</label><label class="r-c"><i></i>After buttons and actions</label><label class="r-d"><i></i>Disposal</label></div>
    <div class="btns"><div class="btn">Help</div><div class="btn">Cancel</div><div class="btn">Create</div></div>
  </div>
</div>
</body>
</html>
```
FILE: styles.css
```css
*{box-sizing:border-box}
body{margin:0;width:2242px;height:1440px;overflow:hidden;position:relative;display:flex;flex-direction:column;background:#d6d6d6;color:#000;font:18.500px/1.2 "Noto Sans","Open Sans",sans-serif;white-space:nowrap}
i,b{display:block;font-style:normal}
svg{display:block;flex:none;overflow:visible}
.defs{position:absolute}
.svg-serif{font-family:"Liberation Serif",serif}

.titlebar{height:36px;flex:none;display:flex;align-items:center;justify-content:center;background:linear-gradient(#ebebeb,#cacaca);border-bottom:2px solid #666;position:relative}
.lights{position:absolute;left:12px;top:2px;display:flex;gap:16px}
.light{width:24px;height:24px;border-radius:50%;background:linear-gradient(#d8d8d8,#fff);border:2px solid #999;box-shadow:0 1px 0 #eee}
.light.dot{background:radial-gradient(circle,#999 0 4px,#eee 5px)}
.app-title{font-size:26px;letter-spacing:.4px;color:#2b2b2b;line-height:30px;margin-bottom:6px;text-shadow:0 1px #eee}

.options{height:68px;flex:none;display:flex;align-items:center;background:#d6d6d6;border-top:2px solid #eee;border-bottom:2px solid #666;padding-bottom:2px}
.vgrip{width:5px;height:38px;margin:2px 36px 0 5px;background:repeating-linear-gradient(#888 0 2px,transparent 2px 4px)}
.tool-t{width:26px;font:40px/34px "Liberation Serif",serif;color:#333}
.tri{width:0;height:0;border:5px solid transparent;border-top:7px solid #333;border-bottom:0;position:relative;top:-1px}
.tool-t+.tri{margin-left:22px}
.sep{width:2px;height:46px;background:#9c9c9c;flex:none}
.s1{margin-left:11px}
.orient{margin-left:24px}
.s2{margin:0 12px 0 23px}
.combo{display:flex;height:32px;border:2px solid #888;border-radius:2px 6px 6px 2px;background:#fff;flex:none;overflow:hidden;box-shadow:0 2px #e8e8e8}
.combo span{flex:1;padding-left:6px;line-height:28px;letter-spacing:.35px}
.combo b{width:33px;border-left:2px solid #888;background:linear-gradient(#fff,#eee);display:flex;align-items:center;justify-content:center}
.c1{width:212px}.c2{width:140px;margin-left:20px}.s3{margin:0 14px 0 12px}
.c3{width:140px;margin-left:20px}.aaic{margin:0 23px 0 24px}
.select{display:flex;align-items:center;height:34px;border:2px solid #888;border-radius:6px;background:linear-gradient(#fff,#ececec);box-shadow:0 2px #e8e8e8;flex:none}
.select span{flex:1;line-height:26px;padding-bottom:2px}
.none{width:117px;padding:0 8px 0 12px}
.s4{margin:0 14px 0 12px}
.align{width:44px;height:44px;display:flex;align-items:center;justify-content:center;flex:none}
.align+.align{margin-left:4px}
.align.on{background:#a3a3a3;border:2px solid #858585;border-radius:5px}
.s5{margin:0 12px 0 15px}
.color{width:52px;height:32px;background:#7db981;border:2px solid #999;flex:none}
.color+.s6{margin:0 25px 0 11px}
.warp+.s6{margin:0 24px 0 27px}
.s7{margin-left:23px}
.workspace{margin-left:auto;width:162px;height:34px;border:2px solid #999;border-right:0;border-radius:5px 0 0 5px;background:#e2e2e2;color:#777;padding-left:13px;line-height:29px}

.work{flex:1;display:flex;min-height:0}
.divider{width:6px;flex:none;background:linear-gradient(90deg,#606060 0 2px,#828282 2px 4px,#606060 4px)}
.dock-head{height:24px;background:linear-gradient(#a8a8a8 0 2px,#969696 2px,#828282);border-bottom:2px solid #666;display:flex;align-items:center;padding-left:4px;flex:none}
.tools{width:70px;flex:none;background:#d6d6d6;display:flex;flex-direction:column}
.hgrip{width:38px;height:8px;background:repeating-linear-gradient(90deg,#888 0 2px,transparent 2px 4px);flex:none}
.tools>.hgrip{margin:7px 0 15px 14px}
.tool{height:52px;width:64px;display:flex;align-items:center;justify-content:center;position:relative;flex:none;top:-1px}
.tool::after{content:"";position:absolute;right:8px;bottom:7px;width:6px;height:6px;background:linear-gradient(135deg,transparent 45%,#333 45%)}
.tool.bare::after{display:none}
.tsep{width:58px;height:2px;background:#999;margin:2px 0 2px 4px;flex:none}
.tool.sel{height:48px;margin:2px 0 2px 2px;width:62px;background:#a3a3a3;border:2px solid #888;border-radius:5px}
.tool.sel::after{bottom:3px;right:6px}
.big-t{font:40px/36px "Liberation Serif",serif;color:#222;transform:translateY(-1px)}
.minirow{display:flex;gap:16px;padding-left:2px;margin-top:6px;height:30px;flex:none}
.swatches{position:relative;height:62px;flex:none}
.fgc,.bgc{position:absolute;width:40px;height:40px;border:2px solid #666;box-shadow:inset 0 0 0 2px #fff}
.fgc{left:2px;top:0;background:#c5efc5}.bgc{left:22px;top:21px;background:#e0d7f1}
.mask{padding:16px 0 0 12px;flex:none}
.tool.screen{margin-top:13px;width:62px}

.document{width:1136px;flex:none;display:flex;flex-direction:column;background:#929292}
.doctabs{height:40px;flex:none;display:flex;background:#929292;border-bottom:2px solid #666}
.dtab{display:flex;align-items:center;font-weight:700;font-size:19.500px;letter-spacing:.75px;padding-top:2px;color:#2e2e2e;text-shadow:0 1px #aaa;border-right:2px solid #666;background:linear-gradient(#a0a0a0,#909090)}
.dtab .x{font-weight:400;font-size:24px;width:30px;padding-left:15px;box-sizing:content-box;line-height:30px;letter-spacing:0;padding-bottom:2px}
.t1{width:464px}.t2{width:528px}
.dtab.active{background:#d6d6d6;text-shadow:0 1px #eee}
.viewport{flex:1;display:grid;grid-template-columns:32px 1072px 32px;grid-template-rows:32px 1fr;min-height:0}
.corner{background:linear-gradient(90deg,transparent 22px,#999 22px 24px,transparent 24px),linear-gradient(transparent 22px,#999 22px 24px,transparent 24px),#d9d9d9;border-bottom:2px solid #808080}
.hruler{display:flex;overflow:hidden;background:#efefef;border-bottom:2px solid #808080}
.hruler span{flex:none;width:66.670px;padding-left:4px;line-height:23px;font-size:19px;background:linear-gradient(#808080,#808080) 0 0/2px 30px no-repeat,repeating-linear-gradient(90deg,#808080 0 2px,transparent 2px 13.330px) 0 100%/100% 6px no-repeat}
.hruler span:first-child{margin-left:-46px}
.vscroll{grid-row:1/3;grid-column:3;background:linear-gradient(90deg,#c8c8c8,#f4f4f4 50%,#fff)}
.vruler{display:flex;flex-direction:column;overflow:hidden;background:#efefef;border-right:2px solid #808080}
.vruler span{flex:none;display:block;height:66.670px;overflow:hidden;background:linear-gradient(#808080,#808080) 0 0/32px 2px no-repeat,repeating-linear-gradient(#808080 0 2px,transparent 2px 13.330px) 100% 0/6px 100% no-repeat;white-space:normal;word-break:break-all;line-height:16px;font-size:18.500px;padding:4px 16px 0 3px}
.vruler span:first-child{margin-top:-30px}
.canvas{position:relative;overflow:hidden;background:#929292}
.artboard{position:absolute;left:286px;top:170px;width:500px;height:890px;background:conic-gradient(#ccc 25%,#fff 0 50%,#ccc 0 75%,#fff 0) 0 0/16px 16px;box-shadow:0 5px 12px rgba(0,0,0,.5)}
.artboard>*{position:absolute}
.placeholder{left:31px;top:46px;width:434px;height:796px;background:#fdc689}
.row-bg{left:31px;top:46px;width:434px;height:208px;background:#c4df9b}
.bubble{left:42px;top:60px;width:412px;height:176px;border-radius:53px;background:#e0d6f1}
.pill{left:298px;top:145px;width:124px;height:85px;border-radius:42px;background:#00f}
.a-title,.a-msg{transform-origin:0 0;font-weight:300;-webkit-text-stroke:.3px}
.a-title{left:101px;top:87px;font-size:42px;line-height:56px;transform:scaleX(.96)}
.a-msg{left:84px;top:144px;font-size:34px;line-height:46px;color:#ea6d92;transform:scaleX(.905)}
.status{height:32px;flex:none;display:flex;border-top:2px solid #999;background:#d6d6d6}
.status>*{border-right:2px solid #999;display:flex;align-items:center;justify-content:center;letter-spacing:.3px}
.zoomv{width:122px;background:#fff}
.drive{width:46px}.doc{width:343px}.play{width:25px}
.play i{width:0;height:0;border:9px solid transparent;border-left:12px solid #444;border-right:0}
.hscroll{flex:1;background:linear-gradient(#c8c8c8,#fff 80%);border:0!important}
.scorner{width:32px;border:0!important}

.right{flex:1;display:flex;flex-direction:column;min-width:0}
.dock-head.wide{padding:0 2px 0 52px}
.back{transform:scaleX(-1)}
.wide svg:nth-child(2){margin-left:508px}
.wide svg:nth-child(3){margin-left:auto}
.panels{flex:1;display:flex;min-height:0}
.strip{width:74px;flex:none;background:#d6d6d6}
.sgroup{border-bottom:2px solid #6a6a6a;display:flex;flex-direction:column;align-items:center;border-top:2px solid #eee}
.sgroup .hgrip{margin:5px 0 0}
.g1{height:138px}.g1 svg:nth-of-type(1){margin:12px 0 20px 2px}
.g2{height:82px}.g2 svg{margin-top:15px}
.g3{height:138px}
.ai{font-size:35px;line-height:34px;color:#333;border-right:2px solid #444;padding-right:2px;margin-top:16px;font-family:"Liberation Sans",sans-serif;height:32px}
.para{font:40px/40px "Liberation Sans",sans-serif;color:#333;margin-top:16px}
.g4{height:82px}.g4 svg{margin-top:15px}

.ptabs{height:36px;flex:none;display:flex;background:linear-gradient(#9b9b9b,#8d8d8d);border-bottom:2px solid #eee;box-shadow:inset 0 -2px #666;font-family:"Noto Sans",sans-serif}
.ptabs span{font-weight:700;color:#2e2e2e;border-right:2px solid #666;height:32px;line-height:33px;overflow:hidden;text-shadow:0 1px #bbb}
.ptabs .on{background:#d6d6d6;height:36px}
.ptabs svg{margin:9px 8px 0 auto}
.k1{width:74px;padding-left:14px}.k2{width:94px;padding-left:12px;letter-spacing:.2px}
.layers .ptabs svg{margin-right:2px}
.l1{width:88px;padding-left:14px}.l2{width:43px;padding-left:13px}.l3{width:86px;padding-left:11px}.l4{width:48px;padding-left:11px}.l5{width:86px;padding-left:11px}

.kwik{width:516px;flex:none;display:flex;flex-direction:column;background:#232323;font-family:"Liberation Sans",Arial,sans-serif}
.ktop{height:231px;border-bottom:2px solid #303030;flex:none}
.toolset{font-size:16px;font-weight:700;color:#eea93c;line-height:20px;padding:6px 0 0 6px;letter-spacing:-.1px}
.kgrid{display:grid;grid-template-columns:repeat(6,58px);padding-left:15px;align-items:center;justify-items:start}
.colors{height:44px;grid-template-columns:58px 58px 58px 58px 166px 58px 40px;padding-left:14px}
.pp{display:flex;align-items:center;height:22px;background:linear-gradient(#303030,#303030) 0 11px/100% 2px no-repeat;padding-left:20px;position:relative;top:2px}
.pp i{border:14px solid transparent;border-top:12px solid #c4c4c4;border-bottom:0;margin-right:6px}
.pp span{font-size:20px;color:#1d9bf0;background:#232323;line-height:22px;letter-spacing:0;-webkit-text-stroke:.5px #1d9bf0}
.r1{height:44px}.r2{height:43px}.r3{height:44px}
.proj{display:flex;padding:9px 4px 0 13px;height:124px;flex:none}
.publish{width:79px;height:103px;background:linear-gradient(#2b2b33,#15151a);border-radius:3px;box-shadow:0 2px 3px #000;display:flex;flex-direction:column;align-items:center;padding-top:4px;gap:3px;color:#eee;font-size:14.500px;letter-spacing:-.2px;-webkit-text-stroke:.4px #eee}
.publish svg{margin-left:1px}
.pinfo{padding:5px 0 0 8px;display:flex;flex-direction:column;color:#b5b5b5;font-size:20px}
.pinfo b{font-size:28px;line-height:31px;color:#fff}
.pinfo>span{line-height:23px}
.pic{display:flex;gap:10px;padding:9px 0 0 7px}
.pic svg:last-child{margin-left:-3px}
.close{margin:3px 0 0 auto}
.pagerow{height:47px;border-bottom:2px solid #303030;display:flex;align-items:center;padding:2px 14px 0 16px;color:#b5b5b5;font-size:18.500px;flex:none}
.pagerow svg:nth-child(2){margin:0 13px 0 6px}
.bin{margin-left:auto}
.filterrow{height:60px;border-bottom:2px solid #1a1a1a;display:flex;align-items:center;padding:0 10px 0 14px;flex:none}
.alldrop{width:216px;height:32px;margin-left:16px;background:linear-gradient(#b5b5b5,#7f7f7f);border-radius:2px;display:flex;align-items:center;padding:0 14px 0 16px;color:#222;font-size:19px;box-shadow:0 2px #111}
.alldrop span{flex:1;padding-bottom:5px;letter-spacing:1.500px;-webkit-text-stroke:.7px #222}
.alldrop i{width:2px;height:20px;background:#333;margin-right:12px}
.alldrop b{border:7px solid transparent;border-top:11px solid #fff;border-bottom:0}
.p1{margin-left:auto}.p2{margin-left:8px}
.coderow{height:61px;background:#373737;display:flex;align-items:center;padding-left:37px;gap:8px;color:#fff;font-size:22.500px;flex:none;-webkit-text-stroke:.4px #fff}
.coderow span{padding-bottom:2px}
.kfill{flex:1;background:#1b1b1b}
.kfoot{height:58px;border-top:2px solid #333;background:linear-gradient(#2b2b2b,#222);display:flex;padding:14px 0 0 14px;color:#e8a030;font-size:19.500px;flex:none;-webkit-text-stroke:.4px #e8a030}
.lic{margin:12px 0 0 18px;width:295px;letter-spacing:.25px}.ver{margin:12px 0 0;width:84px;letter-spacing:.3px}.cloud{margin:7px 0 0}

.layers{flex:1;min-width:0;display:flex;flex-direction:column;background:#d6d6d6}
.lrow{display:flex;align-items:center;border-bottom:2px solid #999;border-top:2px solid #eee;flex:none}
.filter{height:54px;border-top:0;padding:0 0 2px 8px}
.kind{width:128px;padding:0 7px 0 14px;gap:5px}
.fi1{margin-left:22px}.fi2{margin-left:24px}.fit{font:36px/34px "Liberation Serif",serif;color:#333;margin-left:26px;width:24px;-webkit-text-stroke:.6px #333}
.fi4{margin-left:24px}.fi5{margin-left:25px}
.toggle{width:18px;height:34px;margin-left:auto;margin-right:2px;border:2px solid #888;background:linear-gradient(#fff 0,#ccc 45%,#777 46% 54%,#aaa 54%)}
.blend{height:56px;padding:0 0 2px 8px}
.normal{width:230px;padding:0 8px 0 12px}
.blend label{margin:4px 6px 0 8px}
.pc{width:96px;margin-top:2px}
.combo.pc span{letter-spacing:0}
.blend .pc,.lock .pc{margin-left:auto;margin-right:2px}
.lock{height:60px;padding:0 0 3px 10px}
.lk1{margin-left:15px}.lk2{margin-left:17px}.lk3{margin-left:14px}.lk4{margin-left:21px}
.fill{margin-left:auto}.lock .pc{margin-left:7px;margin-top:0}
.llist{flex:1;display:flex;min-height:0;background:#c4c4c4}
ul{margin:0;padding:0;list-style:none;width:398px}
li{height:78px;display:flex;align-items:center;border-bottom:2px solid #999;background:linear-gradient(90deg,#d6d6d6 60px,#999 60px 62px,transparent 62px),#d6d6d6}
li.cur{background:linear-gradient(90deg,#d6d6d6 60px,#999 60px 62px,transparent 62px),#b4cbf8}
li.last{height:80px}
.eyec{width:60px;display:flex;justify-content:center;margin-right:2px}
.th{width:86px;padding-left:1px;flex:none}
li.last .th{width:60px}
.tt{font:40px/40px "Liberation Serif",serif;color:#222;padding-left:25px}
.tt em{display:inline-block;font-style:normal;transform:scaleX(1.22);-webkit-text-stroke:1.200px #222}
.ff{padding-left:26px}
li>span:last-child{padding-top:6px}
.noeye{width:24px;height:24px;border:2px solid #e8e8e8;border-right-color:#999;border-bottom-color:#999}
.lscroll{flex:1;background:linear-gradient(90deg,#c8c8c8,#f2f2f2 50%,#fff)}
.lfoot{height:40px;flex:none;border-top:4px solid #999;box-shadow:inset 0 2px #eee;display:flex;align-items:center;justify-content:space-between;padding:2px 52px 0 22px}
.fx{font:italic 28px/26px "Liberation Serif",serif;color:#222}
.more{position:relative}
.more::after{content:"";position:absolute;right:-8px;bottom:-3px;border:3px solid transparent;border-top:4px solid #222;border-bottom:0}

.dialog{position:absolute;left:768px;top:694px;width:1048px;height:370px;border-radius:9px;background:#e8e8e8;box-shadow:0 0 2px #333,0 32px 60px 4px rgba(0,0,0,.62);font-size:26px;color:#111}
.dialog header{height:44px;border-radius:9px 9px 0 0;background:linear-gradient(#e8e8e8,#b8b8b8);border-bottom:2px solid #666;text-align:center;line-height:43px;letter-spacing:.5px;color:#3a3a3a;text-shadow:0 1px #ddd}
.body{padding:30px 29px 0 30px}
.frow{display:flex;align-items:center;height:40px}
.frow.two{height:48px;margin-top:30px}
.input{height:40px;border:2px solid #111;background:#f5f5f5;line-height:32px;padding-left:3px}
.nm{width:100px}
.dialog .ff{width:147px;padding:0}
.i1{width:260px;letter-spacing:.3px}.i2{width:661px;margin-right:19px;letter-spacing:.78px}
.btn{width:161px;height:48px;border:2px solid #777;background:linear-gradient(#fff 50%,#e4e4e4);text-align:center;line-height:42px;flex:none}
.radios{display:flex;margin-top:30px;height:40px;letter-spacing:.35px}
.radios label{display:flex;align-items:center;line-height:34px;padding-bottom:2px;gap:6px}
.radios i{width:26px;height:26px;border-radius:50%;border:2px solid #888;border-top-color:#666;background:linear-gradient(#fff,#f0f0f0);margin-top:5px;box-shadow:0 2px 2px rgba(0,0,0,.3)}
.radios i.on{background:radial-gradient(circle,#111 0 5px,#f5f5f5 6px)}
.radios .r-a{width:224px;letter-spacing:0}.r-b{width:206px}.r-c{width:384px}
.btns{display:flex;justify-content:flex-end;gap:19px;margin-top:30px}
```
